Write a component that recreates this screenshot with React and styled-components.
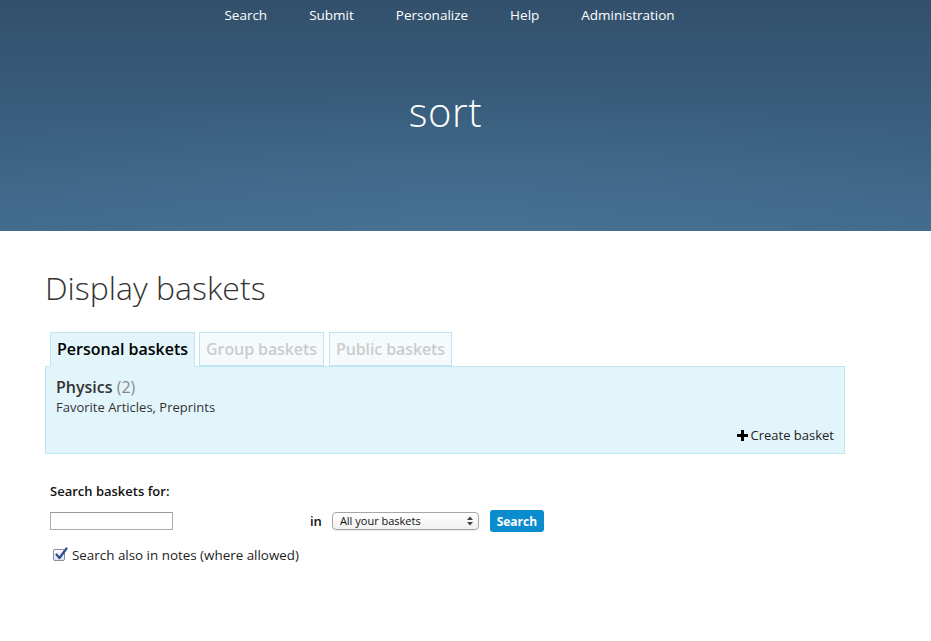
import React from "react";
import styled, { createGlobalStyle } from "styled-components";

const Global = createGlobalStyle`
  html, body { margin: 0; padding: 0; background: #fff; }
  body { font-family: "Open Sans", "Liberation Sans", sans-serif; color: #333; }
  * { box-sizing: border-box; }
`;

const Header = styled.header`
  height: 231px;
  background:
    radial-gradient(ellipse 70% 60% at 50% 100%, rgba(80, 125, 160, 0.35), rgba(80, 125, 160, 0) 100%),
    linear-gradient(to bottom, #33506b 0%, #3a5f7f 55%, #416b8d 100%);
  display: flex;
  flex-direction: column;
  align-items: center;
  padding-right: 40px;
`;

const Nav = styled.nav`
  display: flex;
  gap: 42px;
  padding-top: 5px;
  padding-left: 8px;
`;

const NavLink = styled.a`
  color: #fff;
  font-size: 13.5px;
  line-height: 20px;
  text-decoration: none;
`;

const Title = styled.h1`
  margin: 64px 0 0;
  color: #fff;
  font-weight: 300;
  font-size: 40px;
  line-height: 46px;
  letter-spacing: 0.6px;
`;

const Main = styled.main`
  padding: 0 45px;
  width: 890px;
`;

const PageHeading = styled.h2`
  margin: 38px 0 0;
  font-weight: 300;
  font-size: 32px;
  line-height: 38px;
  color: #333;
`;

const Tabs = styled.div`
  display: flex;
  gap: 4px;
  margin-top: 25px;
  padding-left: 5px;
  position: relative;
  z-index: 1;
`;

const Tab = styled.div`
  padding: 7px 6px;
  font-size: 16px;
  line-height: 18px;
  font-weight: 600;
  border: 1px solid #bfe4f2;
  border-bottom: ${(p) => (p.$active ? "1px solid #e2f5fb" : "1px solid #bfe4f2")};
  margin-bottom: ${(p) => (p.$active ? "-1px" : "0")};
  background: ${(p) => (p.$active ? "#e2f5fb" : "#f5fbfd")};
  color: ${(p) => (p.$active ? "#000" : "#cccccc")};
  letter-spacing: ${(p) => (p.$active ? "0" : "-0.1px")};
  margin-right: ${(p) => p.$mr || 0}px;
`;

const Panel = styled.section`
  width: 800px;
  background: #e2f5fb;
  border: 1px solid #bfe4f2;
  padding: 10px 10px 9px;
  display: flex;
  flex-direction: column;
`;

const BasketTitle = styled.div`
  font-size: 16px;
  line-height: 20px;
  font-weight: 600;
  color: #333;
`;

const Count = styled.span`
  font-weight: 400;
  color: #888;
`;

const BasketList = styled.div`
  font-size: 13px;
  line-height: 20px;
  color: #333;
`;

const CreateRow = styled.div`
  display: flex;
  justify-content: flex-end;
  margin-top: 9px;
`;

const CreateLink = styled.a`
  display: flex;
  align-items: center;
  gap: 3px;
  font-size: 13px;
  line-height: 18px;
  color: #222;
  text-decoration: none;
`;

const SearchSection = styled.form`
  margin-top: 28px;
  padding-left: 5px;
`;

const Label = styled.div`
  font-size: 13px;
  line-height: 18px;
  font-weight: 600;
  color: #111;
`;

const SearchRow = styled.div`
  display: grid;
  grid-template-columns: 260px auto auto auto;
  align-items: center;
  justify-content: start;
  margin-top: 10px;
  height: 22px;
`;

const TextInput = styled.input`
  display: block;
  width: 123px;
  height: 18px;
  border: 1px solid #ababab;
  border-top-color: #9a9a9a;
  padding: 0 3px;
  font-size: 12px;
  background: #fff;
`;

const InWord = styled.span`
  font-size: 13px;
  font-weight: 600;
  color: #111;
  margin-right: 10px;
`;

const SelectWrap = styled.div`
  position: relative;
  width: 147px;
  height: 18px;
  margin-right: 11px;
`;

const Select = styled.select`
  display: block;
  appearance: none;
  width: 100%;
  height: 100%;
  border: 1px solid #a6a6a6;
  border-radius: 4px;
  background: linear-gradient(#ffffff, #f1f1f1);
  font-family: "Open Sans", "Liberation Sans", sans-serif;
  font-size: 11px;
  line-height: 14px;
  padding: 0 0 1px 7px;
  color: #111;
  box-shadow: 0 1px 1px rgba(0, 0, 0, 0.08);
`;

const Arrows = styled.svg`
  position: absolute;
  right: 6px;
  top: 4px;
  pointer-events: none;
`;

const Button = styled.button`
  display: block;
  background: #0b8ccf;
  color: #fff;
  border: none;
  border-radius: 3px;
  font-family: "Open Sans", "Liberation Sans", sans-serif;
  font-weight: 700;
  font-size: 12px;
  height: 22px;
  width: 54px;
  padding: 0;
`;

const CheckRow = styled.label`
  display: flex;
  align-items: center;
  gap: 7px;
  margin-top: 13px;
  padding-left: 3px;
  font-size: 13.4px;
  line-height: 20px;
  color: #222;
`;

const CheckBox = styled.span`
  width: 12px;
  height: 12px;
  border: 1px solid #8c8c9a;
  border-radius: 2px;
  background: linear-gradient(#fdfdff, #dfe3ee);
  position: relative;
  display: inline-block;
`;

const CheckMark = styled.svg`
  position: absolute;
  left: 0px;
  top: -3px;
`;

export default function App() {
  return (
    <>
      <Global />
      <Header>
        <Nav>
          <NavLink>Search</NavLink>
          <NavLink>Submit</NavLink>
          <NavLink>Personalize</NavLink>
          <NavLink>Help</NavLink>
          <NavLink>Administration</NavLink>
        </Nav>
        <Title>sort</Title>
      </Header>
      <Main>
        <PageHeading>Display baskets</PageHeading>
        <Tabs>
          <Tab $active>Personal baskets</Tab>
          <Tab $mr={1}>Group baskets</Tab>
          <Tab>Public baskets</Tab>
        </Tabs>
        <Panel>
          <BasketTitle>
            Physics <Count>(2)</Count>
          </BasketTitle>
          <BasketList>Favorite Articles, Preprints</BasketList>
          <CreateRow>
            <CreateLink>
              <svg width="11" height="11" viewBox="0 0 11 11">
                <path d="M4 0h3v4h4v3H7v4H4V7H0V4h4z" fill="#000" />
              </svg>
              Create basket
            </CreateLink>
          </CreateRow>
        </Panel>
        <SearchSection onSubmit={(e) => e.preventDefault()}>
          <Label>Search baskets for:</Label>
          <SearchRow>
            <TextInput type="text" />
            <InWord>in</InWord>
            <SelectWrap>
              <Select defaultValue="all">
                <option value="all">All your baskets</option>
              </Select>
              <Arrows width="6" height="10" viewBox="0 0 6 10">
                <path d="M0 4L3 0.5L6 4z" fill="#444" />
                <path d="M0 6L3 9.5L6 6z" fill="#444" />
              </Arrows>
            </SelectWrap>
            <Button type="submit">Search</Button>
          </SearchRow>
          <CheckRow>
            <CheckBox>
              <CheckMark width="14" height="14" viewBox="0 0 14 14">
                <path d="M2.5 7.5L5.5 11L12.5 1.5" fill="none" stroke="#2a4d8f" strokeWidth="2.2" strokeLinecap="round" strokeLinejoin="round" />
              </CheckMark>
            </CheckBox>
            Search also in notes (where allowed)
          </CheckRow>
        </SearchSection>
      </Main>
    </>
  );
}
